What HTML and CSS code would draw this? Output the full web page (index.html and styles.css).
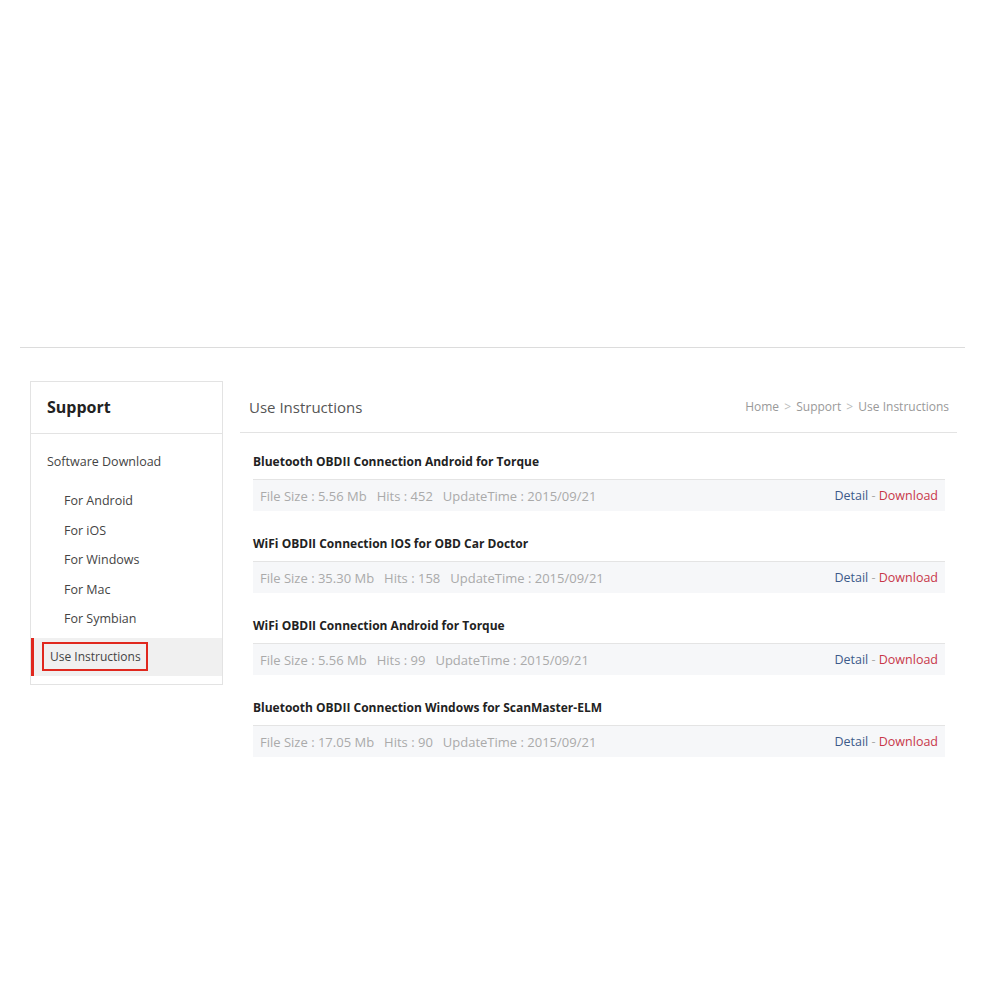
FILE: index.html
```html
<!DOCTYPE html>
<html lang="en">
<head>
    <meta charset="UTF-8">
    <title>Use Instructions</title>
    <link rel="stylesheet" href="styles.css">
</head>
<body>
    <div class="top-space"></div>
    <div class="page">
        <aside class="side">
            <h2 class="side-title">Support</h2>
            <ul class="side-menu">
                <li class="side-group">Software Download</li>
                <li class="side-sub">For Android</li>
                <li class="side-sub">For iOS</li>
                <li class="side-sub">For Windows</li>
                <li class="side-sub">For Mac</li>
                <li class="side-sub">For Symbian</li>
                <li class="side-active"><span class="boxed">Use Instructions</span></li>
            </ul>
        </aside>
        <main class="content">
            <div class="content-head">
                <h1>Use Instructions</h1>
                <div class="crumbs">Home <span class="sep">&gt;</span> Support <span class="sep">&gt;</span> Use Instructions</div>
            </div>
            <div class="doc">
                <h3>Bluetooth OBDII Connection Android for Torque</h3>
                <div class="doc-row">
                    <span class="meta"><span>File Size : 5.56 Mb</span><span>Hits : 452</span><span>UpdateTime : 2015/09/21</span></span>
                    <span class="links"><a class="detail" href="#">Detail</a> - <a class="down" href="#">Download</a></span>
                </div>
            </div>
            <div class="doc">
                <h3>WiFi OBDII Connection IOS for OBD Car Doctor</h3>
                <div class="doc-row">
                    <span class="meta"><span>File Size : 35.30 Mb</span><span>Hits : 158</span><span>UpdateTime : 2015/09/21</span></span>
                    <span class="links"><a class="detail" href="#">Detail</a> - <a class="down" href="#">Download</a></span>
                </div>
            </div>
            <div class="doc">
                <h3>WiFi OBDII Connection Android for Torque</h3>
                <div class="doc-row">
                    <span class="meta"><span>File Size : 5.56 Mb</span><span>Hits : 99</span><span>UpdateTime : 2015/09/21</span></span>
                    <span class="links"><a class="detail" href="#">Detail</a> - <a class="down" href="#">Download</a></span>
                </div>
            </div>
            <div class="doc">
                <h3>Bluetooth OBDII Connection Windows for ScanMaster-ELM</h3>
                <div class="doc-row">
                    <span class="meta"><span>File Size : 17.05 Mb</span><span>Hits : 90</span><span>UpdateTime : 2015/09/21</span></span>
                    <span class="links"><a class="detail" href="#">Detail</a> - <a class="down" href="#">Download</a></span>
                </div>
            </div>
        </main>
    </div>
</body>
</html>
```

FILE: styles.css
```css
body {
    margin: 0;
    background: #fff;
    font-family: "Open Sans", "Noto Sans CJK SC", sans-serif;
    color: #333;
}
.top-space {
    height: 347px;
    margin: 0 35px 0 20px;
    border-bottom: 1px solid #dcdcdc;
}
.page {
    display: flex;
    align-items: flex-start;
    gap: 17px;
    margin: 33px 43px 0 30px;
}
.side {
    width: 191px;
    border: 1px solid #e3e3e3;
    flex-shrink: 0;
}
.side-title {
    margin: 0;
    height: 51px;
    line-height: 51px;
    padding-left: 16px;
    font-size: 16px;
    font-weight: bold;
    color: #222;
    border-bottom: 1px solid #e3e3e3;
}
.side-menu {
    list-style: none;
    margin: 0;
    padding: 14px 0 8px;
    font-size: 12.5px;
    color: #444;
}
.side-group {
    padding-left: 16px;
    height: 28px;
    line-height: 28px;
    margin-bottom: 10px;
}
.side-sub {
    padding-left: 33px;
    height: 29.6px;
    line-height: 29.6px;
}
.side-active {
    margin-top: 4px;
    height: 38px;
    display: flex;
    align-items: center;
    background: #f0f0f0;
    border-left: 3px solid #e0281e;
    padding-left: 8px;
}
.boxed {
    border: 2px solid #e0281e;
    padding: 3px 5px 3px 6px;
    line-height: 19px;
    font-size: 12px;
}
.content {
    flex: 1;
}
.content-head {
    display: flex;
    justify-content: space-between;
    align-items: center;
    height: 51px;
    padding: 0 8px 0 9px;
    border-bottom: 1px solid #e3e3e3;
}
.content-head h1 {
    margin: 0;
    font-size: 15px;
    font-weight: normal;
    color: #555;
}
.crumbs {
    font-size: 12px;
    color: #999;
}
.sep {
    color: #bbb;
    margin: 0 2px;
}
.doc {
    margin: 0 12px 0 13px;
    padding-top: 19px;
    padding-bottom: 4px;
}
.doc h3 {
    margin: 0;
    height: 27px;
    line-height: 20px;
    font-size: 12px;
    font-weight: bold;
    color: #222;
}
.doc-row {
    display: flex;
    justify-content: space-between;
    align-items: center;
    height: 31px;
    padding: 0 7px;
    background: #f6f7f9;
    border-top: 1px solid #e4e4e4;
    font-size: 12.5px;
}
.meta {
    display: flex;
    gap: 10px;
    font-size: 13px;
    color: #aaa;
}
.links {
    color: #aaa;
}
.links a {
    text-decoration: none;
}
.detail {
    color: #3d5a8a;
}
.down {
    color: #c8374a;
}
```
